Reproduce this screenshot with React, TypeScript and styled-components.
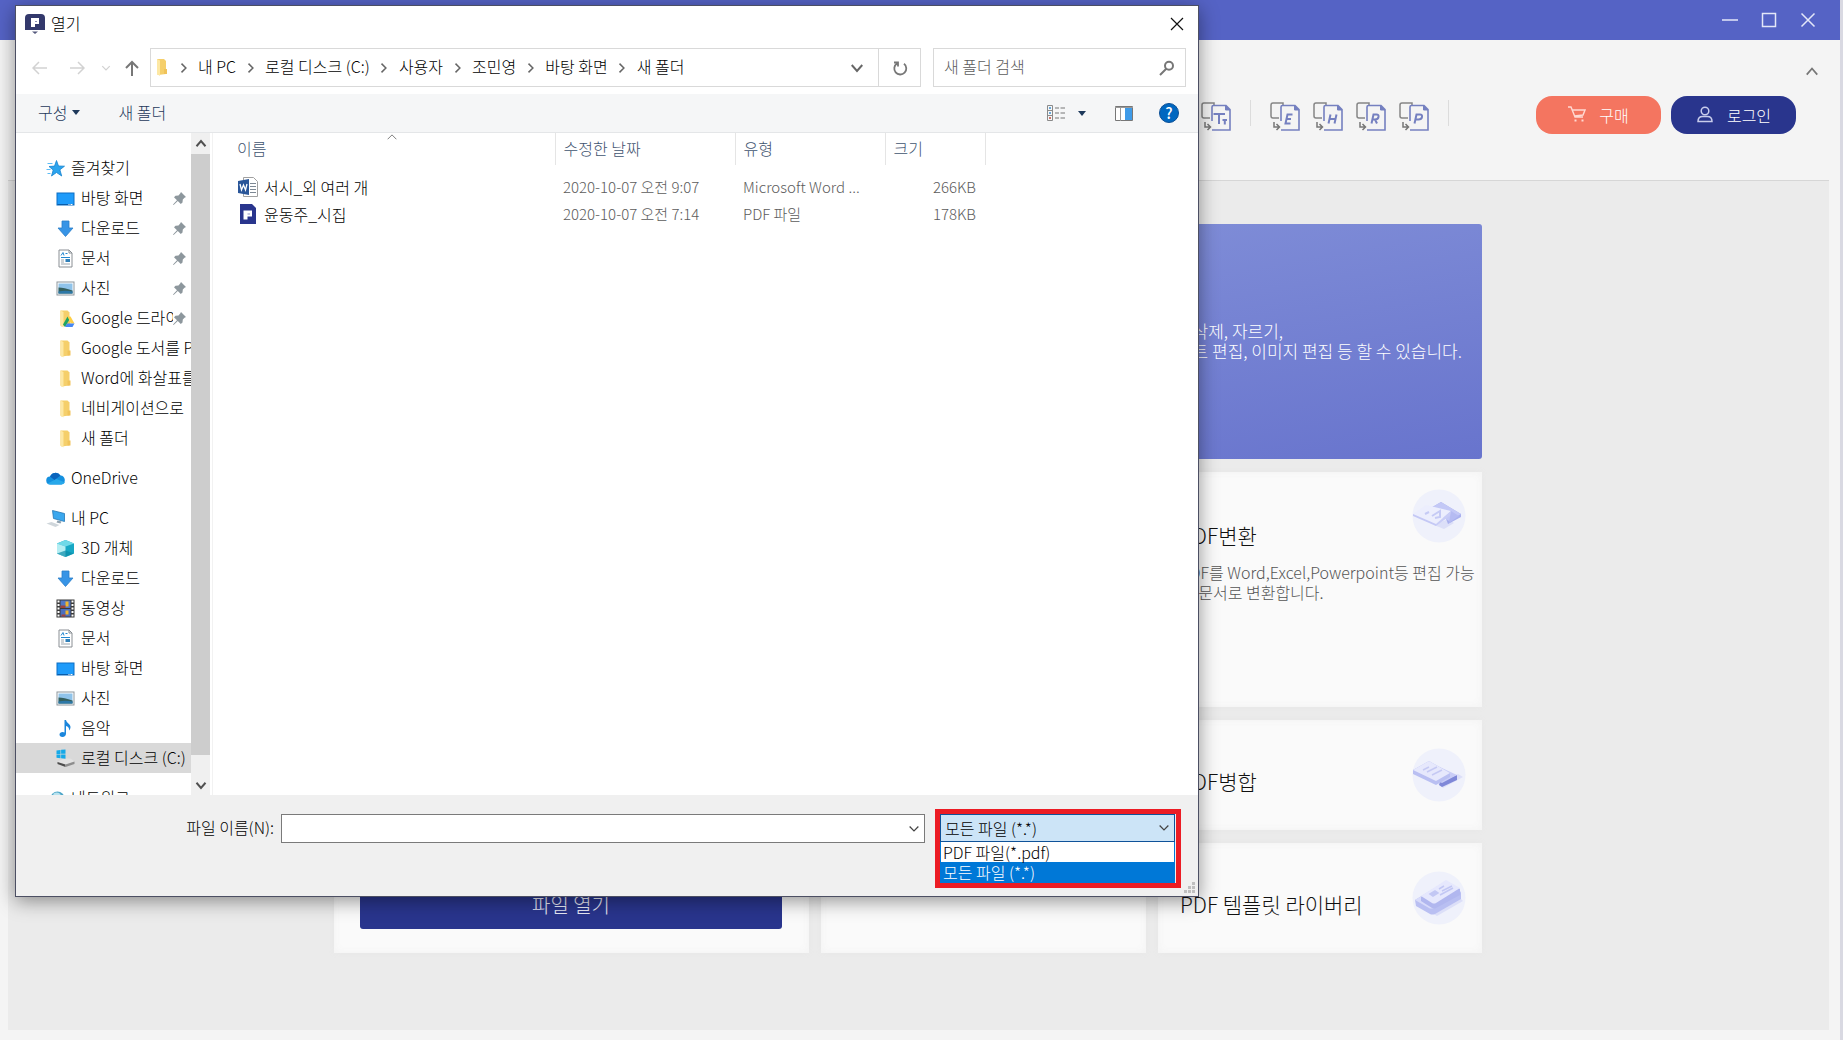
import React from "react";
import styled, { createGlobalStyle, css } from "styled-components";

const Global = createGlobalStyle`
  *, *::before, *::after { box-sizing: border-box; }
  body {
    margin: 0;
    background: #d9d9e2;
    font-family: "Noto Sans CJK KR", "Noto Sans", sans-serif;
    font-size: 16px;
    font-weight: 300;
    color: #000;
  }
  button, input, select { font: inherit; color: inherit; }
  button { padding: 0; border: 0; background: none; }
  ul, ol { list-style: none; margin: 0; padding: 0; }
  h1, h2, p { margin: 0; font-weight: inherit; }
  svg { display: block; flex: none; }
`;

/* ---------- application window ---------- */

const AppWindow = styled.div`
  min-height: 100vh;
  margin-right: 3px;
  display: flex;
  flex-direction: column;
  background: #f4f4f4;
  position: relative;
  overflow: hidden;
`;

const TitleBar = styled.header`
  height: 40px;
  padding-right: 13px;
  display: flex;
  justify-content: flex-end;
  align-items: center;
  background: #5563c5;
`;

const WindowButton = styled.button`
  width: 39px;
  height: 40px;
  display: grid;
  place-items: center;
`;

const Ribbon = styled.div`
  height: 141px;
  margin: 0 11px 0 8px;
  padding: 56px 33px 0 0;
  display: flex;
  justify-content: flex-end;
  align-items: flex-start;
  border-bottom: 1px solid #d6d6d6;
  position: relative;
`;

const Tools = styled.div`
  display: flex;
  align-items: center;
  gap: 13px;
  height: 42px;
  margin-right: 77px;
`;

const ToolButton = styled.button`
  width: 30px;
  height: 30px;
`;

const ToolDivider = styled.span`
  width: 1px;
  height: 26px;
  margin: 0 6px 8px;
  background: #dcdcdc;
  &:last-child { margin-right: 0; }
`;

const Collapse = styled.button`
  position: absolute;
  top: 25px;
  right: 9px;
  width: 16px;
  height: 14px;
  display: grid;
  place-items: center;
`;

const Pill = styled.button<{ $bg: string }>`
  width: 125px;
  height: 38px;
  margin-left: 10px;
  padding-bottom: 1px;
  display: flex;
  align-items: center;
  justify-content: center;
  gap: 13px;
  border-radius: 16px;
  background: ${(p) => p.$bg};
  color: #fff;
`;

const Workspace = styled.main`
  flex: 1;
  margin: 0 11px 10px 8px;
  padding: 43px 21px 76px 0;
  background: #ebebeb;
  display: grid;
  grid-template-columns: 475px 325px 324px;
  grid-template-rows: 235px 235px 110px 110px;
  column-gap: 12px;
  row-gap: 13px;
  justify-content: center;
  align-content: start;
`;

const panel = css`
  background: #fafafa;
  box-shadow: inset 0 0 8px #f2f2f2, 0 0 6px #e7e7e7;
`;

const OpenPanel = styled.section`
  ${panel}
  grid-row: 1 / span 4;
  padding: 0 27px 24px 26px;
  display: flex;
  align-items: flex-end;
`;

const OpenButton = styled.button`
  flex: 1;
  height: 50px;
  border-radius: 3px;
  background: #29358d;
  color: #e9ebf7;
  font-size: 20px;
`;

const Hero = styled.section`
  grid-column: 2 / span 2;
  padding: 0 20px 2px 0;
  display: flex;
  align-items: center;
  justify-content: flex-end;
  border-radius: 3px;
  background: linear-gradient(170deg, #8391d9, #6874cd);
  color: #fff;
  font-size: 17px;
  line-height: 20px;
`;

const Card = styled.section<{ $tall?: boolean }>`
  ${panel}
  padding: ${(p) => (p.$tall ? "17px 16px 0 22px" : "28px 16px 0 22px")};
  display: grid;
  grid-template-columns: 1fr 54px;
  align-content: start;
`;

const CardTitle = styled.h2<{ $tall?: boolean }>`
  padding-top: ${(p) => (p.$tall ? 30 : 17)}px;
  font-size: 21px;
  line-height: 32px;
  color: #111;
  white-space: nowrap;
`;

const CardText = styled.p`
  grid-column: 1 / -1;
  padding-top: 11px;
  line-height: 20px;
  color: #555;
  white-space: nowrap;
`;

/* ---------- file dialog ---------- */

const Dialog = styled.section`
  position: absolute;
  left: 15px;
  top: 5px;
  width: 1184px;
  display: flex;
  flex-direction: column;
  background: #fff;
  border: 1px solid #4c4f63;
  box-shadow: 0 4px 18px rgba(0, 0, 0, 0.42);
`;

const DialogTitle = styled.div`
  height: 36px;
  padding: 0 11px 0 9px;
  display: flex;
  align-items: center;
  gap: 6px;
`;

const DialogName = styled.h1`
  flex: 1;
  padding-bottom: 2px;
  font-size: 16px;
`;

const IconButton = styled.button<{ $w: number }>`
  width: ${(p) => p.$w}px;
  height: 24px;
  display: grid;
  place-items: center;
`;

const NavRow = styled.div`
  height: 52px;
  padding: 6px 12px 7px 8px;
  display: flex;
  align-items: stretch;
`;

const NavButtons = styled.div`
  width: 126px;
  display: flex;
  align-items: center;
`;

const AddressBar = styled.nav`
  flex: 1;
  display: flex;
  align-items: stretch;
  border: 1px solid #d9d9d9;
`;

const Crumbs = styled.ol`
  flex: 1;
  padding-left: 4px;
  display: flex;
  align-items: center;
`;

const Crumb = styled.li`
  display: flex;
  align-items: center;
`;

const CrumbLink = styled.a`
  padding-bottom: 3px;
  color: #000;
  text-decoration: none;
`;

const ChevronBox = styled.span`
  width: 29px;
  display: grid;
  place-items: center;
`;

const AddressButton = styled.button<{ $line?: boolean }>`
  width: 42px;
  display: grid;
  place-items: center;
  border-left: ${(p) => (p.$line ? "1px solid #d9d9d9" : "0")};
`;

const SearchBox = styled.label`
  width: 253px;
  margin-left: 12px;
  padding: 0 10px;
  display: flex;
  align-items: center;
  border: 1px solid #d9d9d9;
`;

const SearchInput = styled.input`
  flex: 1;
  min-width: 0;
  padding: 0 0 3px;
  border: 0;
  outline: 0;
  background: none;
  &::placeholder { color: #5c5c5c; opacity: 1; }
`;

const CommandBar = styled.div`
  height: 39px;
  padding: 0 19px 0 22px;
  display: flex;
  align-items: center;
  background: #f5f6f7;
  border-bottom: 1px solid #e4e6e8;
  color: #1e395b;
`;

const Command = styled.button`
  margin-right: 38px;
  padding-bottom: 2px;
  display: flex;
  align-items: center;
  gap: 5px;
`;

const CommandIcons = styled.div`
  margin-left: auto;
  display: flex;
  align-items: center;
`;

const HelpButton = styled.button`
  width: 20px;
  height: 20px;
  margin-left: 10px;
  border-radius: 50%;
  border: 1px solid #0b4f96;
  background: #0067c0;
  color: #fff;
  font-size: 15px;
  font-weight: 500;
  line-height: 18px;
`;

const Body = styled.div`
  display: flex;
  height: 662px;
`;

const Tree = styled.nav`
  width: 175px;
  padding-top: 20px;
  overflow: hidden;
`;

const TreeGroup = styled.ul`
  margin-bottom: 10px;
`;

const TreeRow = styled.li<{ $level: number; $selected?: boolean }>`
  height: 30px;
  padding-left: ${(p) => (p.$level ? 40 : 30)}px;
  display: flex;
  align-items: center;
  background: ${(p) => (p.$selected ? "#d9d9d9" : "none")};
`;

const TreeLink = styled.a`
  flex: 1;
  min-width: 0;
  display: flex;
  align-items: center;
  gap: 6px;
  color: #000;
  text-decoration: none;
  white-space: nowrap;
  overflow: hidden;
`;

const TreeName = styled.span`
  padding-bottom: 2px;
  overflow: hidden;
`;

const PinBox = styled.span`
  width: 18px;
`;

const ScrollBar = styled.div`
  width: 19px;
  display: flex;
  flex-direction: column;
  background: #f0f0f0;
`;

const ScrollButton = styled.button`
  height: 21px;
  display: grid;
  place-items: center;
`;

const ScrollThumb = styled.div`
  height: 601px;
  background: #cdcdcd;
`;

const ScrollTrack = styled.div`
  flex: 1;
`;

const Files = styled.div`
  flex: 1;
  margin-left: 2px;
  border-left: 1px solid #f2f2f2;
`;

const FileTable = styled.table`
  width: 772px;
  table-layout: fixed;
  border-collapse: collapse;
  font-size: 15px;
  color: #5c5c5c;
`;

const HeadCell = styled.th<{ $w: number; $first?: boolean }>`
  width: ${(p) => p.$w}px;
  height: 32px;
  padding: 0 0 3px ${(p) => (p.$first ? 24 : 8)}px;
  border-right: 1px solid #e5e5e5;
  text-align: left;
  font-size: 16px;
  font-weight: inherit;
  line-height: 24px;
  color: #3f5470;
  position: relative;
`;

const SortMark = styled.span`
  position: absolute;
  top: 0;
  left: 174px;
`;

const Spacer = styled.tr`
  height: 8px;
`;

const FileCell = styled.td<{ $right?: boolean }>`
  height: 27px;
  padding: 0 ${(p) => (p.$right ? 9 : 0)}px 0 8px;
  text-align: ${(p) => (p.$right ? "right" : "left")};
  white-space: nowrap;
`;

const FileName = styled.div`
  padding-left: 17px;
  display: flex;
  align-items: center;
  gap: 6px;
  font-size: 16px;
  line-height: 24px;
  color: #000;
`;

const Footer = styled.div`
  height: 101px;
  padding: 14px 17px 0 0;
  display: flex;
  align-items: flex-start;
  background: #f0f0f0;
  position: relative;
`;

const NameLabel = styled.label`
  width: 258px;
  margin: 3px 7px 0 0;
  line-height: 30px;
  text-align: right;
`;

const NameBox = styled.div`
  flex: 1;
  height: 29px;
  margin-top: 5px;
  display: flex;
  align-items: center;
  border: 1px solid #7a7a7a;
  background: #fff;
`;

const NameInput = styled.input`
  flex: 1;
  border: 0;
  outline: 0;
  background: none;
`;

const Highlight = styled.div`
  width: 246px;
  margin-left: 10px;
  padding-right: 1px;
  border: 5px solid #ec1c24;
  background: #f0f0f0;
`;

const TypeBox = styled.div`
  height: 28px;
  display: grid;
  align-items: center;
  border: 1px solid #0f5299;
  background: #cce4f7;
  & > * { grid-area: 1 / 1; }
  & > svg { justify-self: end; margin-right: 5px; pointer-events: none; }
`;

const TypeSelect = styled.select`
  appearance: none;
  width: 100%;
  height: 26px;
  padding: 0 4px 1px;
  border: 0;
  outline: 0;
  background: none;
`;

const TypeList = styled.ul`
  border: solid #0078d7;
  border-width: 0 1px 1px;
  background: #fff;
`;

const TypeOption = styled.li<{ $active?: boolean }>`
  padding: 0 2px;
  line-height: 20px;
  height: 20px;
  background: ${(p) => (p.$active ? "#0078d7" : "#fff")};
  color: ${(p) => (p.$active ? "#fff" : "#000")};
`;

const Grip = styled.svg`
  position: absolute;
  right: 2px;
  bottom: 2px;
`;

/* ---------- drawings ---------- */

const Line = ({ d, s = 16, c = "#666", w = 1.5 }: { d: string; s?: number; c?: string; w?: number }) => (
  <svg width={s} height={s} viewBox="0 0 16 16" fill="none" stroke={c} strokeWidth={w}>
    <path d={d} />
  </svg>
);

const Caret = () => (
  <svg width="8" height="5" viewBox="0 0 8 5"><path d="M0 0h8L4 5z" fill="#1e395b" /></svg>
);

const FolderShape = () => (
  <>
    <path d="M4 1h7l2 2v13l-8 1-1-1z" fill="#f5cf6b" />
    <path d="M4 1l3 1.5V18l-3-2z" fill="#fde8a4" />
    <path d="M11 11h3v5h-3z" fill="#f0c35a" />
  </>
);

const icons: Record<string, React.ReactNode> = {
  star: (
    <>
      <path d="M10 1l2 5.500 6 .2-4.600 3.600 1.800 6.200-5.200-3.500-5 3.500 1.700-6L2.500 7l5.500-.4z" fill="#2ba4ee" stroke="#1783cf" strokeWidth=".8" />
      <path d="M1 4h5M0 10h4M1 14h3" stroke="#5cbcf5" />
    </>
  ),
  desktop: (
    <>
      <rect x=".5" y="3.500" width="17" height="12" fill="#1e9bfa" stroke="#0d6fc4" />
      <path d="M1 15h16" stroke="#0a5ca8" />
      <path d="M12 15h1M14 15h2" stroke="#fff" />
    </>
  ),
  download: <path d="M5.500 1.500h7v7h4L9 17 1.500 8.500h4z" fill="#3794e6" stroke="#2a7dc9" strokeWidth=".8" />,
  doc: (
    <>
      <path d="M2.500.5h10l3 3v14h-13z" fill="#fff" stroke="#8a8f94" />
      <path d="M12.500.5v3h3" fill="none" stroke="#8a8f94" />
      <path d="M4.500 6l2-3 1 3M9 4h2M4.500 8h9" stroke="#2387cf" fill="none" />
      <rect x="9" y="9.500" width="4.500" height="3" fill="#2f7fb8" />
      <path d="M4.500 10.500h3M4.500 12.500h3M4.500 14.500h9" stroke="#9aa5ad" />
    </>
  ),
  photo: (
    <>
      <rect x=".5" y="2.500" width="17" height="13" fill="#fff" stroke="#8e979d" />
      <rect x="2" y="4" width="14" height="10" fill="#8fc3ea" />
      <path d="M2 8c4 0 8 1 14 3v3H2z" fill="#35605e" />
      <path d="M2 12c5-1 9-1 14 0v2H2z" fill="#2d78a8" />
    </>
  ),
  folder: <FolderShape />,
  gfolder: (
    <>
      <FolderShape />
      <path d="M11 7l-4.500 8 2 2.500L13 10z" fill="#1da462" />
      <path d="M11 7h3l4 7h-3.500z" fill="#ffcf44" />
      <path d="M8.500 17.500l2-3.500H18l-2 3.500z" fill="#4688f4" />
    </>
  ),
  cube: (
    <>
      <path d="M9 .5L17.500 4v10L9 17.500.5 14V4z" fill="#17a7c4" />
      <path d="M9 .5L17.500 4 9 7 .5 4z" fill="#6fd9e8" />
      <path d="M.5 4L9 7v10.500L.5 14z" fill="#b4eef3" />
      <path d="M.5 14L9 11l8.500 3L9 17.500z" fill="#0c8ba8" opacity=".7" />
    </>
  ),
  video: (
    <>
      <rect width="18" height="18" fill="#3a3a3a" />
      <rect x="4" y="1" width="10" height="7.500" fill="#5277c6" />
      <rect x="4" y="9.500" width="10" height="7.500" fill="#4a6fbf" />
      <path d="M9 2h3v5H9zM9 11h3v4H9z" fill="#f1b62d" />
      <path d="M4 6h5v2.500H4zM5 15h4v2H5z" fill="#a0443c" />
      <path d="M2 1v17M16 1v17" stroke="#fff" strokeWidth="2" strokeDasharray="2 1.500" />
    </>
  ),
  music: (
    <path d="M8 .5h1.500c.5 3 4.500 4 4.500 7 0 2-1 3-1.500 3.500.5-2.500-1-4-3-4.500V14c0 2-1.500 3.500-3.500 3.500S3 16.500 3 15s1.500-2.500 3-2.500c1 0 1.500.2 2 .5z" fill="#1b86dc" />
  ),
  drive: (
    <>
      <path d="M1 12.500l6-3.500h7l4 3-9 3z" fill="#e2e2e2" />
      <path d="M1 12.500l8 2.500v2.500l-8-3z" fill="#4d4d4d" />
      <path d="M9 15l9-3v2.500l-9 3z" fill="#8d8d8d" />
      <path d="M0 1l4-.6v4H0zM4.600.3L9 0v4.300H4.600zM0 5h4v3.800L0 8.300zM4.600 5H9v4.300l-4.400-.5z" fill="#15a9e8" />
    </>
  ),
  cloud: (
    <>
      <path d="M4 15a4 4 0 01-.5-8A6 6 0 0114 6a4.600 4.600 0 011 9z" fill="#1490df" />
      <path d="M3.500 7A6 6 0 0114 6l-6 4.500z" fill="#0a64bd" />
      <path d="M1 14l9-4.500 8.500 3.500q-1.500 2-3.500 2H4q-2 0-3-1z" fill="#28a8ea" />
    </>
  ),
  pc: (
    <>
      <path d="M6 1l12 3v8L7 9z" fill="#3aa7ee" stroke="#2477b5" strokeWidth=".8" />
      <path d="M11 11l4 1-1 2-4-1z" fill="#8fa1ae" />
      <path d="M0 14l5-1.500 8 3L9 17.500z" fill="#cfd6db" />
    </>
  ),
  net: (
    <>
      <circle cx="11" cy="9" r="7" fill="#4ea6c8" />
      <path d="M7 4c3-2 6-1 7 1s-3 3-4 6-4-2-3-7z" fill="#b8e2ee" />
      <path d="M0 9l5-2v6z" fill="#5a6f7c" />
    </>
  ),
};

const Glyph = ({ name }: { name: string }) => (
  <svg width="19" height="19" viewBox="-.5 -.5 19 19">{icons[name]}</svg>
);

const Pin = () => (
  <svg width="13" height="13" viewBox="0 0 13 13" fill="#8d979d">
    <path d="M8 0l5 5-1.500.8L9.800 7.500l-.3 3L7.800 12 4.800 9 .6 13 0 12.400l4-4.200-3-3L2.500 3.700l3-.3L7.200 1.500z" />
  </svg>
);

const Brand = ({ size, tail }: { size: number; tail?: boolean }) => (
  <svg width={size} height={size} viewBox="0 0 20 20">
    {tail ? (
      <>
        <path d="M4 0h12a4 4 0 014 4v12H0V4a4 4 0 014-4z" fill="#33396c" />
        <path d="M7 17.500h6l-3 2.500z" fill="#55597d" />
        <path d="M6 4h8v6h-4v3H6z" fill="#fff" />
        <path d="M10 7h2v1h-2z" fill="#8c90b4" />
      </>
    ) : (
      <>
        <path d="M2 0h12l4 4v16H2z" fill="#29358d" />
        <path d="M5.500 6.500H14v6h-4.500v3h-4z" fill="#fff" />
        <path d="M9.500 9.500H12v1H9.500z" fill="#8c93c6" />
      </>
    )}
  </svg>
);

const WordFile = () => (
  <svg width="20" height="20" viewBox="0 0 20 20">
    <path d="M5.500.5h10l4 4v15h-14z" fill="#fff" stroke="#a0a0a0" />
    <path d="M12 6.500h6M12 9.500h6M12 12.500h6M12 15.500h6" stroke="#7d8894" />
    <path d="M0 4l11-2v16L0 16z" fill="#2a5699" />
    <path d="M2 7l1.500 6L5.500 8l2 5L9 7" fill="none" stroke="#fff" strokeWidth="1.300" />
  </svg>
);

const toolMarks: Record<string, string> = {
  T: "M13.500 13v-1H23v1M18 12v10M21.500 18h4.500M23.800 18v4.500",
  E: "M22.500 12.500h-5l-2 9h5M16.500 17h4.500",
  H: "M17.500 12.500l-2 9M23.500 12.500l-2 9M16.500 17h6",
  R: "M15.500 21.500l2-9h3q2.500 0 2 2.500T19 17.500l2 4M17 17.500h2",
  P: "M15.500 21.500l2-9h3.500q2.500 0 2 2.500T19.500 17.500h-3",
};

const ToolIcon = ({ mark }: { mark: string }) => (
  <svg width="30" height="30" viewBox="0 0 30 30" fill="none">
    <path d="M9 16H3q-2 0-2-2V3q0-2 2-2h10v3" stroke="#858585" strokeWidth="1.500" />
    <path d="M4 20v5h5M6.500 22l3 3-3 3" stroke="#777" strokeWidth="1.500" />
    <path d="M11 19V5q0-1.500 1.500-1.500H25l4 4V28H11" stroke="#7580c0" strokeWidth="1.600" />
    <path d="M24.500 3.500V8H29z" fill="#7580c0" stroke="#7580c0" />
    <path d={toolMarks[mark]} stroke="#7580c0" strokeWidth="2" />
  </svg>
);

const Art = ({ kind }: { kind: "convert" | "merge" | "template" }) => (
  <svg width="54" height="54" viewBox="0 0 54 54">
    <circle cx="27" cy="27" r="26.500" fill="#eff1fb" />
    {kind === "convert" && (
      <>
        <path d="M22 36l14-6 6 4-10 6z" fill="#dcdff8" />
        <path d="M29 13l20 12v3L36 35l-3-8-16-7z" fill="#a9b0ee" />
        <path d="M29 13l20 12-12 7-20-12z" fill="#c3c8f6" />
        <path d="M1 25l13-9 25 6-15 13z" fill="#eceefd" />
        <path d="M1 25l23 10v2L1 27z" fill="#c4c8f5" />
        <path d="M24 35l15-13v4L24 37z" fill="#c8ccf6" />
        <path d="M39 22l-2 12 10-7z" fill="#b5bbf2" />
        <path d="M13 25l4-2M20 27l8-5v6l-5 1" stroke="#c5caf5" strokeWidth="2" fill="none" />
      </>
    )}
    {kind === "merge" && (
      <>
        <path d="M26 36l20-10 5 3-20 11z" fill="#dcdff8" />
        <path d="M28 34l17-7v5l-15 7-3-2z" fill="#7f88d8" />
        <path d="M17 14l28 13-15 8L4 22z" fill="#c9cdf7" />
        <path d="M1 22l16-9 21 12v4l-14 8L1 26z" fill="#b9bff2" />
        <path d="M1 22l16-9 21 12-14 8z" fill="#e6e8fc" />
        <path d="M11 22l6-3M15 24l10-5M20 27l10-5" stroke="#c5c9f3" strokeWidth="1.500" />
      </>
    )}
    {kind === "template" && (
      <>
        <path d="M20 42l28-15 3 3-26 15z" fill="#dcdff8" />
        <path d="M3 29l28-17 18 9v7L23 43q-3 1-5 0L4 35z" fill="#b9bff2" />
        <path d="M3 29l28-17 18 9-27 16q-3 1-5 0z" fill="#d8dbfa" />
        <path d="M9 26l25-16 14 8v6L24 37q-2 1-4 0L9 30z" fill="#b1b7ef" />
        <path d="M9 25L34 9l14 8-24 15q-2 1-4 0z" fill="#e6e8fd" />
        <path d="M18 23l5-3 3 2-5 3zM27 18l5-3M30 20l10-5M28 24l13-7" stroke="#c2c7f4" strokeWidth="1.500" fill="#c2c7f4" />
      </>
    )}
  </svg>
);

/* ---------- data ---------- */

type Node = { icon: string; name: string; pin?: boolean; on?: boolean };

const groups: { key: string; head: Node; items: Node[] }[] = [
  {
    key: "fav",
    head: { icon: "star", name: "즐겨찾기" },
    items: [
      { icon: "desktop", name: "바탕 화면", pin: true },
      { icon: "download", name: "다운로드", pin: true },
      { icon: "doc", name: "문서", pin: true },
      { icon: "photo", name: "사진", pin: true },
      { icon: "gfolder", name: "Google 드라이브", pin: true },
      { icon: "folder", name: "Google 도서를 PDF" },
      { icon: "folder", name: "Word에 화살표를" },
      { icon: "folder", name: "네비게이션으로" },
      { icon: "folder", name: "새 폴더" },
    ],
  },
  { key: "one", head: { icon: "cloud", name: "OneDrive" }, items: [] },
  {
    key: "pc",
    head: { icon: "pc", name: "내 PC" },
    items: [
      { icon: "cube", name: "3D 개체" },
      { icon: "download", name: "다운로드" },
      { icon: "video", name: "동영상" },
      { icon: "doc", name: "문서" },
      { icon: "desktop", name: "바탕 화면" },
      { icon: "photo", name: "사진" },
      { icon: "music", name: "음악" },
      { icon: "drive", name: "로컬 디스크 (C:)", on: true },
    ],
  },
  { key: "net", head: { icon: "net", name: "네트워크" }, items: [] },
];

const path = ["내 PC", "로컬 디스크 (C:)", "사용자", "조민영", "바탕 화면", "새 폴더"];

const files = [
  { icon: <WordFile />, name: "서시_외 여러 개", date: "2020-10-07 오전 9:07", type: "Microsoft Word ...", size: "266KB" },
  { icon: <Brand size={20} />, name: "윤동주_시집", date: "2020-10-07 오전 7:14", type: "PDF 파일", size: "178KB" },
];

const TreeNode = ({ node, level }: { node: Node; level: number }) => (
  <TreeRow $level={level} $selected={node.on}>
    <TreeLink href="#">
      <Glyph name={node.icon} />
      <TreeName>{node.name}</TreeName>
    </TreeLink>
    {node.pin && <PinBox><Pin /></PinBox>}
  </TreeRow>
);

const FileDialog = () => (
  <Dialog role="dialog" aria-label="열기">
    <DialogTitle>
      <Brand size={20} tail />
      <DialogName>열기</DialogName>
      <IconButton $w={20} aria-label="닫기"><Line d="M2 2l12 12M14 2L2 14" c="#111" w={1.2} /></IconButton>
    </DialogTitle>
    <NavRow>
      <NavButtons>
        <IconButton $w={32} aria-label="뒤로"><Line d="M15 8H1M7 2L1 8l6 6" c="#d2d2d2" /></IconButton>
        <IconButton $w={46} aria-label="앞으로"><Line d="M1 8h14M9 2l6 6-6 6" c="#d2d2d2" /></IconButton>
        <IconButton $w={14} aria-label="최근 위치"><Line s={10} d="M2 5l6 6 6-6" c="#d2d2d2" w={2} /></IconButton>
        <IconButton $w={38} aria-label="위로"><Line d="M8 16V2M2 8l6-6 6 6" c="#777" w={2} /></IconButton>
      </NavButtons>
      <AddressBar aria-label="경로">
        <Crumbs>
          <li><svg width="14" height="19" viewBox="3 0 12 19"><FolderShape /></svg></li>
          {path.map((name) => (
            <Crumb key={name}>
              <ChevronBox><Line s={10} d="M4 1l7 7-7 7" w={2.4} /></ChevronBox>
              <CrumbLink href="#">{name}</CrumbLink>
            </Crumb>
          ))}
        </Crumbs>
        <AddressButton aria-label="이전 위치"><Line s={12} d="M1 4l7 8 7-8" w={2.6} /></AddressButton>
        <AddressButton $line aria-label="새로 고침">
          <Line d="M5 3.500a6 6 0 107 .3M2 2.500h4v4" c="#777" w={1.8} />
        </AddressButton>
      </AddressBar>
      <SearchBox>
        <SearchInput type="text" aria-label="새 폴더 검색" placeholder="새 폴더 검색" />
        <Line d="M10 1.800a4 4 0 110 8 4 4 0 010-8zM7 9l-6 6" c="#777" w={2} />
      </SearchBox>
    </NavRow>
    <CommandBar>
      <Command>구성 <Caret /></Command>
      <Command>새 폴더</Command>
      <CommandIcons>
        <IconButton $w={18} aria-label="보기">
          <svg width="18" height="16" viewBox="0 0 18 16" fill="none">
            <path d="M.5.5h5v15h-5zM.5 5.500h5M.5 10.500h5" stroke="#8a8a8a" />
            <path d="M2 3h2M2 8h2" stroke="#3b8fd0" strokeWidth="1.500" />
            <path d="M2 13h2" stroke="#c04a3a" strokeWidth="1.500" />
            <path d="M8 3h4M13.500 3H18M8 8h4M13.500 8H18M8 13h4M13.500 13H18" stroke="#777" />
          </svg>
        </IconButton>
        <IconButton $w={34} aria-label="보기 옵션"><Caret /></IconButton>
        <IconButton $w={50} aria-label="미리 보기 창">
          <svg width="18" height="15" viewBox="0 0 18 15">
            <path d="M.5.5h17v14H.5z" fill="#fff" stroke="#777" />
            <path d="M0 1.500h18M5.500 2v13" stroke="#999" />
            <path d="M10 2h7v12h-7z" fill="#3f9be8" />
          </svg>
        </IconButton>
        <HelpButton aria-label="도움말">?</HelpButton>
      </CommandIcons>
    </CommandBar>
    <Body>
      <Tree aria-label="폴더">
        {groups.map((g) => (
          <TreeGroup key={g.key}>
            <TreeNode node={g.head} level={0} />
            {g.items.map((n) => <TreeNode key={n.name} node={n} level={1} />)}
          </TreeGroup>
        ))}
      </Tree>
      <ScrollBar>
        <ScrollButton aria-label="위로 스크롤"><Line s={12} d="M2 11l6-7 6 7" c="#505050" w={2.6} /></ScrollButton>
        <ScrollThumb />
        <ScrollTrack />
        <ScrollButton aria-label="아래로 스크롤"><Line s={12} d="M2 5l6 7 6-7" c="#505050" w={2.6} /></ScrollButton>
      </ScrollBar>
      <Files>
        <FileTable>
          <thead>
            <tr>
              <HeadCell $w={342} $first>
                이름
                <SortMark><Line s={10} d="M1 10l7-7 7 7" c="#777" /></SortMark>
              </HeadCell>
              <HeadCell $w={180}>수정한 날짜</HeadCell>
              <HeadCell $w={150}>유형</HeadCell>
              <HeadCell $w={100}>크기</HeadCell>
            </tr>
          </thead>
          <tbody>
            <Spacer />
            {files.map((f) => (
              <tr key={f.name}>
                <FileCell><FileName>{f.icon}{f.name}</FileName></FileCell>
                <FileCell>{f.date}</FileCell>
                <FileCell>{f.type}</FileCell>
                <FileCell $right>{f.size}</FileCell>
              </tr>
            ))}
          </tbody>
        </FileTable>
      </Files>
    </Body>
    <Footer>
      <NameLabel htmlFor="file-name">파일 이름(N):</NameLabel>
      <NameBox>
        <NameInput id="file-name" type="text" />
        <IconButton $w={20} aria-label="최근 파일"><Line s={10} d="M1 4l7 7 7-7" c="#444" w={2} /></IconButton>
      </NameBox>
      <Highlight>
        <TypeBox>
          <TypeSelect aria-label="파일 형식" defaultValue="all">
            <option value="pdf">PDF 파일(*.pdf)</option>
            <option value="all">모든 파일 (*.*)</option>
          </TypeSelect>
          <Line s={10} d="M1 4l7 7 7-7" c="#444" w={2} />
        </TypeBox>
        <TypeList role="listbox" aria-label="파일 형식 목록">
          <TypeOption role="option">PDF 파일(*.pdf)</TypeOption>
          <TypeOption role="option" $active>모든 파일 (*.*)</TypeOption>
        </TypeList>
      </Highlight>
      <Grip width="12" height="12" viewBox="0 0 12 12" fill="#bfbfbf">
        <path d="M8 0h3v3H8zM4 4h3v3H4zM8 4h3v3H8zM0 8h3v3H0zM4 8h3v3H4zM8 8h3v3H8z" />
      </Grip>
    </Footer>
  </Dialog>
);

export default function App() {
  return (
    <>
      <Global />
      <AppWindow>
        <TitleBar>
          <WindowButton aria-label="최소화"><Line d="M0 8h16" c="#e4e7f8" /></WindowButton>
          <WindowButton aria-label="최대화"><Line d="M1.500 1.500h13v13h-13z" c="#e4e7f8" /></WindowButton>
          <WindowButton aria-label="닫기"><Line d="M1.500 1.500l13 13M14.500 1.500l-13 13" c="#e4e7f8" /></WindowButton>
        </TitleBar>
        <Ribbon>
          <Collapse aria-label="리본 접기"><Line s={14} d="M2 11l6-7 6 7" c="#777" w={2} /></Collapse>
          <Tools>
            <ToolButton aria-label="텍스트로 변환"><ToolIcon mark="T" /></ToolButton>
            <ToolDivider />
            {["E", "H", "R", "P"].map((m) => (
              <ToolButton key={m} aria-label={m}><ToolIcon mark={m} /></ToolButton>
            ))}
            <ToolDivider />
          </Tools>
          <Pill $bg="#f47560">
            <svg width="18" height="17" viewBox="0 0 18 17" fill="none" stroke="#ffd9d2" strokeWidth="1.400">
              <path d="M0 1h3l4 10h8M4.500 4H17l-2 5-8.500 1" />
              <path d="M6.500 14.500h2M13.500 14.500h2" strokeWidth="2" />
            </svg>
            구매
          </Pill>
          <Pill $bg="#29358d">
            <svg width="18" height="17" viewBox="0 0 18 17" fill="none" stroke="#c9cdec" strokeWidth="1.500">
              <circle cx="9" cy="5" r="3.800" />
              <path d="M2 15.500q0-5 4.500-5h5q4.500 0 4.500 5z" />
            </svg>
            로그인
          </Pill>
        </Ribbon>
        <Workspace>
          <OpenPanel><OpenButton>파일 열기</OpenButton></OpenPanel>
          <Hero><p>삭제, 자르기,<br />트 편집, 이미지 편집 등 할 수 있습니다.</p></Hero>
          <Card $tall />
          <Card $tall>
            <CardTitle $tall>PDF변환</CardTitle>
            <Art kind="convert" />
            <CardText>PDF를 Word,Excel,Powerpoint등 편집 가능<br />한 문서로 변환합니다.</CardText>
          </Card>
          <Card />
          <Card>
            <CardTitle>PDF병합</CardTitle>
            <Art kind="merge" />
          </Card>
          <Card />
          <Card>
            <CardTitle>PDF 템플릿 라이버리</CardTitle>
            <Art kind="template" />
          </Card>
        </Workspace>
        <FileDialog />
      </AppWindow>
    </>
  );
}
